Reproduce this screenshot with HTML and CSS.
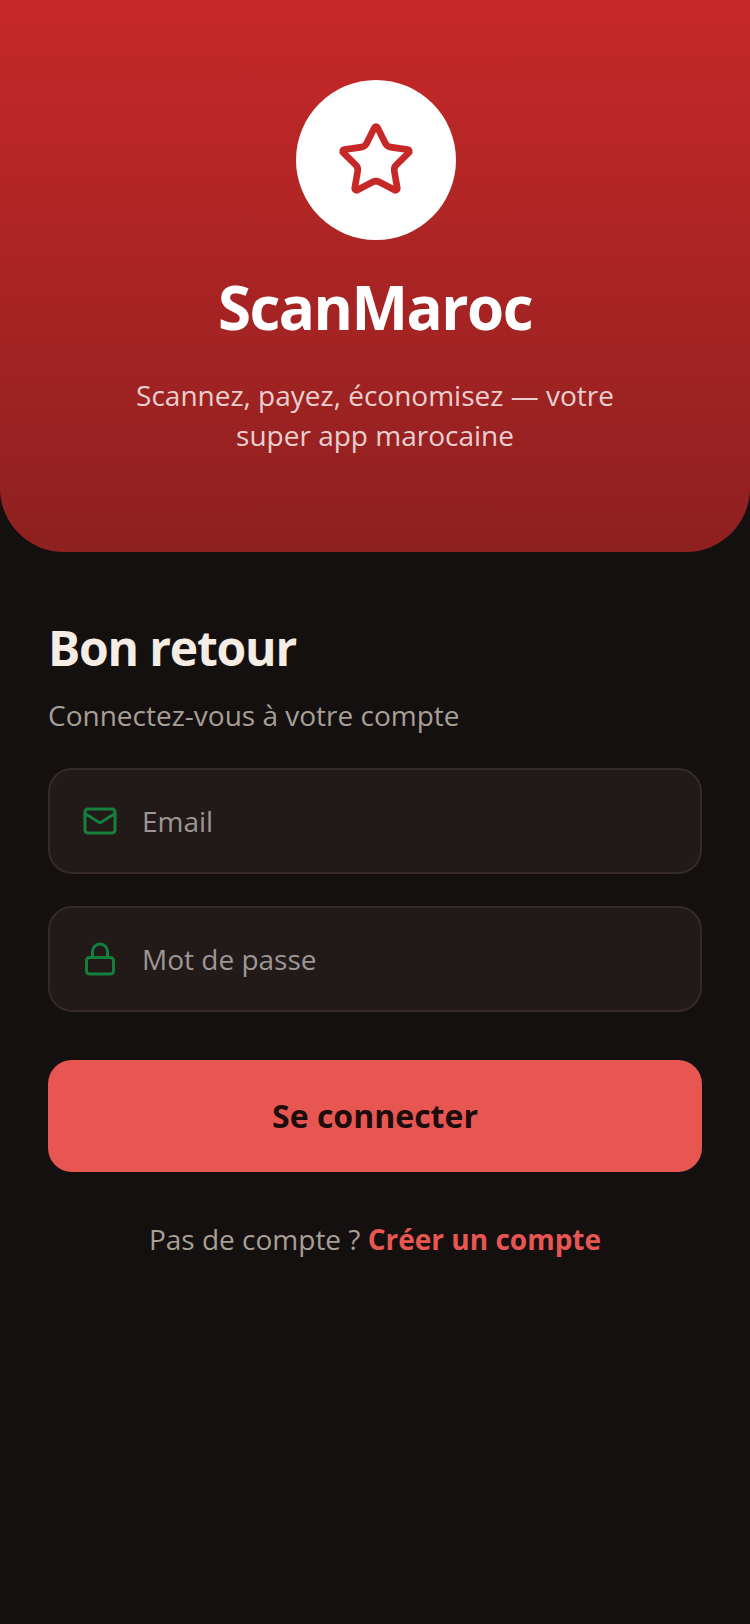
FILE: index.html
```html
<!DOCTYPE html>
<html lang="fr">
<head>
  <meta charset="UTF-8" />
  <meta name="viewport" content="width=device-width, initial-scale=1.0"/>
  <title>ScanMaroc</title>
  <link rel="stylesheet" href="styles.css">
</head>
<body>
  <header class="hero">
    <div class="logo">
      <svg width="80" height="80" viewBox="0 0 24 24" fill="none" stroke="#c62828" stroke-width="2" stroke-linecap="round" stroke-linejoin="round">
        <path d="M11.525 2.295a.53.53 0 0 1 .95 0l2.31 4.679a2.123 2.123 0 0 0 1.595 1.16l5.166.756a.53.53 0 0 1 .294.904l-3.736 3.638a2.123 2.123 0 0 0-.611 1.878l.882 5.14a.53.53 0 0 1-.771.56l-4.618-2.428a2.122 2.122 0 0 0-1.973 0L6.396 21.01a.53.53 0 0 1-.77-.56l.881-5.139a2.122 2.122 0 0 0-.611-1.879L2.16 9.795a.53.53 0 0 1 .294-.906l5.165-.755a2.122 2.122 0 0 0 1.597-1.16z"/>
      </svg>
    </div>
    <h1>ScanMaroc</h1>
    <p>Scannez, payez, économisez — votre super app marocaine</p>
  </header>

  <main class="content">
    <h2>Bon retour</h2>
    <p class="intro">Connectez-vous à votre compte</p>

    <form>
      <div class="field">
        <svg width="36" height="36" viewBox="0 0 24 24" fill="none" stroke="#15803d" stroke-width="2" stroke-linecap="round" stroke-linejoin="round">
          <rect x="2" y="4" width="20" height="16" rx="2"/>
          <path d="m22 7-8.97 5.7a1.94 1.94 0 0 1-2.06 0L2 7"/>
        </svg>
        <span class="placeholder">Email</span>
      </div>
      <div class="field">
        <svg width="36" height="36" viewBox="0 0 24 24" fill="none" stroke="#15803d" stroke-width="2" stroke-linecap="round" stroke-linejoin="round">
          <rect x="3" y="11" width="18" height="11" rx="2"/>
          <path d="M7 11V7a5 5 0 0 1 10 0v4"/>
        </svg>
        <span class="placeholder">Mot de passe</span>
      </div>
      <button type="submit">Se connecter</button>
    </form>

    <p class="signup">Pas de compte ? <a href="#">Créer un compte</a></p>
  </main>
</body>
</html>
```

FILE: styles.css
```css
html, body {
  margin: 0;
  padding: 0;
  height: 100%;
  font-family: "Open Sans", sans-serif;
  background-color: #141010;
}

.hero {
  height: 552px;
  box-sizing: border-box;
  padding-top: 80px;
  display: flex;
  flex-direction: column;
  align-items: center;
  background: linear-gradient(180deg, #c62828, #8e2020);
  border-radius: 0 0 64px 64px;
}

.logo {
  width: 160px;
  height: 160px;
  margin-left: 2px;
  border-radius: 50%;
  background-color: #ffffff;
  display: flex;
  align-items: center;
  justify-content: center;
}

.hero h1 {
  margin: 26px 0 0;
  font-size: 60px;
  line-height: 82px;
  font-weight: 700;
  letter-spacing: -1.5px;
  color: #ffffff;
}

.hero p {
  margin: 27px 0 0;
  width: 520px;
  font-size: 28px;
  line-height: 40px;
  text-align: center;
  color: rgba(255, 255, 255, 0.8);
}

.content {
  padding: 64px 48px 0;
}

.content h2 {
  margin: 0;
  font-size: 48px;
  line-height: 64px;
  font-weight: 700;
  letter-spacing: -1.2px;
  color: #f5ede4;
}

.intro {
  margin: 16px 0 0;
  font-size: 28px;
  line-height: 38px;
  color: #a89f94;
}

form {
  margin-top: 34px;
  display: flex;
  flex-direction: column;
  gap: 32px;
}

.field {
  height: 106px;
  box-sizing: border-box;
  padding: 0 32px;
  display: flex;
  align-items: center;
  gap: 24px;
  background-color: #221a19;
  border: 2px solid #332a29;
  border-radius: 24px;
}

.placeholder {
  font-size: 28px;
  color: #9c9794;
}

button {
  height: 112px;
  margin-top: 16px;
  padding: 0 0 2px;
  border: none;
  border-radius: 24px;
  background-color: #e85652;
  color: #1c0d0c;
  font-family: inherit;
  font-size: 32px;
  font-weight: 700;
  cursor: pointer;
}

.signup {
  margin: 48px 0 0;
  font-size: 28px;
  line-height: 38px;
  text-align: center;
  color: #a89f94;
}

.signup a {
  color: #e85652;
  font-weight: 700;
  text-decoration: none;
}
```
